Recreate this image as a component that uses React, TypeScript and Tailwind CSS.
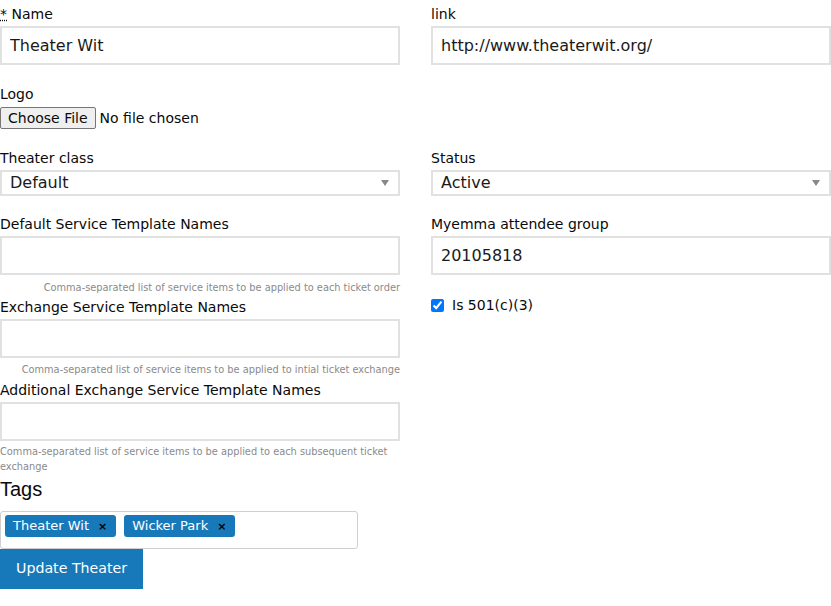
import React from 'react';

const inputCls =
  'block w-full h-[39px] border-2 border-[#e1e1e1] bg-white px-[8px] text-[16px] text-[#1a1a1a] outline-none';

const Label: React.FC<{ children: React.ReactNode }> = ({ children }) => (
  <label className="block h-[23px] leading-[23px] text-[14px] text-[#0a0a0a]">{children}</label>
);

const Select: React.FC<{ value: string; options: string[] }> = ({ value, options }) => (
  <div className="relative">
    <select
      defaultValue={value}
      className="block w-full h-[26px] appearance-none border-2 border-[#e1e1e1] bg-white pl-[8px] pr-[24px] text-[16px] leading-[20px] text-[#1a1a1a] outline-none"
    >
      {options.map((o) => (
        <option key={o}>{o}</option>
      ))}
    </select>
    <svg className="pointer-events-none absolute right-[11px] top-[10px]" width="8" height="6" viewBox="0 0 8 6">
      <path d="M0 0h8L4 6z" fill="#888" />
    </svg>
  </div>
);

const Hint: React.FC<{ className?: string; children: React.ReactNode }> = ({ className, children }) => (
  <p className={`text-[9.8px] text-[#8a8a8a] ${className || ''}`}>{children}</p>
);

const Tag: React.FC<{ children: React.ReactNode }> = ({ children }) => (
  <span className="flex items-center h-[22px] rounded-[3px] bg-[#1779ba] pl-[8px] pr-[9px] text-[13px] text-white">
    <span>{children}</span>
    <span className="ml-[9px] text-[11px] font-bold text-black leading-none">×</span>
  </span>
);

export default function App() {
  return (
    <div className="w-[831px] min-h-[606px] bg-white pt-[3px]" style={{ fontFamily: '"DejaVu Sans", Verdana, sans-serif' }}>
      <form className="grid grid-cols-2 gap-x-[31px]" onSubmit={(e) => e.preventDefault()}>
        {/* row 1 */}
        <div className="mb-[18px]">
          <Label>
            <abbr title="required">*</abbr> Name
          </Label>
          <input className={inputCls} defaultValue="Theater Wit" />
        </div>
        <div className="mb-[18px]">
          <Label>link</Label>
          <input className={inputCls} defaultValue="http://www.theaterwit.org/" />
        </div>

        {/* row 2 */}
        <div className="mb-[18px]">
          <Label>Logo</Label>
          <input
            type="file"
            className="mt-[1px] block h-[22px] text-[14px] text-[#0a0a0a] file:mr-[4px] file:h-[22px] file:rounded-[2px] file:border file:border-[#767676] file:bg-[#efefef] file:px-[7px] file:text-[14px] file:text-[#0a0a0a]"
          />
        </div>
        <div />

        {/* row 3 */}
        <div className="mb-[17px]">
          <Label>Theater class</Label>
          <Select value="Default" options={['Default', 'Premium']} />
        </div>
        <div className="mb-[17px]">
          <Label>Status</Label>
          <Select value="Active" options={['Active', 'Inactive']} />
        </div>

        {/* row 4 */}
        <div>
          <Label>Default Service Template Names</Label>
          <input className={inputCls} />
          <Hint className="mt-[6px] mb-[1px] leading-[14px] text-right">
            Comma-separated list of service items to be applied to each ticket order
          </Hint>

          <Label>Exchange Service Template Names</Label>
          <input className={inputCls} />
          <Hint className="mt-[5px] mb-[2px] leading-[14px] text-right">
            Comma-separated list of service items to be applied to intial ticket exchange
          </Hint>

          <Label>Additional Exchange Service Template Names</Label>
          <input className={inputCls} />
          <Hint className="mt-[3px] leading-[15px]">
            Comma-separated list of service items to be applied to each subsequent ticket exchange
          </Hint>

          <h4
            className="mt-[3px] mb-[10px] h-[24px] leading-[24px] text-[20px] text-[#0a0a0a]"
            style={{ fontFamily: '"Liberation Sans", Arial, sans-serif' }}
          >
            Tags
          </h4>
          <div className="flex h-[38px] w-[358px] items-start gap-[8px] rounded-[3px] border border-[#cfcfcf] px-[4px] pt-[3px]">
            <Tag>Theater Wit</Tag>
            <Tag>Wicker Park</Tag>
          </div>
          <button
            type="submit"
            className="block h-[40px] bg-[#1779ba] px-[16px] text-[14.2px] text-white"
          >
            Update Theater
          </button>
        </div>
        <div>
          <Label>Myemma attendee group</Label>
          <input className={inputCls} defaultValue="20105818" />
          <label className="mt-[20px] flex items-center text-[14px] text-[#0a0a0a]">
            <input type="checkbox" defaultChecked className="m-0 h-[13px] w-[13px]" />
            <span className="ml-[8px]">Is 501(c)(3)</span>
          </label>
        </div>
      </form>
    </div>
  );
}
